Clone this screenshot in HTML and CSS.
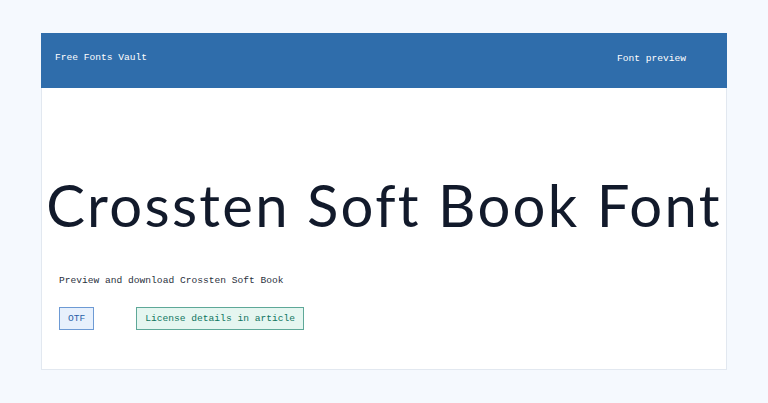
FILE: index.html
```html
<!DOCTYPE html>
<html lang="en">
<head>
<meta charset="utf-8">
<title>Crossten Soft Book Font</title>
<link rel="stylesheet" href="styles.css">
</head>
<body>
<div class="card">
  <header class="topbar">
    <span class="brand">Free Fonts Vault</span>
    <span class="nav">Font preview</span>
  </header>
  <main class="content">
    <h1 class="title">Crossten Soft Book Font</h1>
    <p class="lead">Preview and download Crossten Soft Book</p>
    <div class="tags">
      <span class="tag tag-format">OTF</span>
      <span class="tag tag-license">License details in article</span>
    </div>
  </main>
</div>
</body>
</html>
```
FILE: styles.css
```css
html, body {
  margin: 0;
  padding: 0;
}
body {
  background: #f5f9fe;
  padding: 33px 41px;
  font-family: "Liberation Mono", "DejaVu Sans Mono", monospace;
  font-size: 9.6px;
}
.card {
  background: #ffffff;
  border: 1px solid #e2e8f0;
  height: 337px;
  box-sizing: border-box;
  display: flex;
  flex-direction: column;
}
.topbar {
  background: #2f6dab;
  color: #ffffff;
  height: 55px;
  box-sizing: border-box;
  display: flex;
  justify-content: space-between;
  align-items: flex-start;
  padding: 19px 41px 0 14px;
  margin: -1px -1px 0 -1px;
}
.nav {
  margin-top: 1px;
}
.content {
  padding: 0 16px;
  display: flex;
  flex-direction: column;
}
.title {
  margin: 82px -30px 0;
  text-align: center;
  font-family: "Lato", sans-serif;
  font-weight: 400;
  font-size: 58px;
  letter-spacing: 2.3px;
  line-height: 70px;
  color: #121a2b;
  white-space: nowrap;
}
.lead {
  margin: 34px 0 0 1px;
  color: #2a3140;
  line-height: 14px;
}
.tags {
  display: flex;
  gap: 42px;
  margin: 19px 0 0 1px;
}
.tag {
  border: 1px solid;
  padding: 0 8px;
  height: 23px;
  line-height: 21px;
  box-sizing: border-box;
}
.tag-format {
  background: #e7f0fc;
  border-color: #6d9ad4;
  color: #2a5fa8;
}
.tag-license {
  background: #e5f6f0;
  border-color: #5ea898;
  color: #0f7560;
}
```
